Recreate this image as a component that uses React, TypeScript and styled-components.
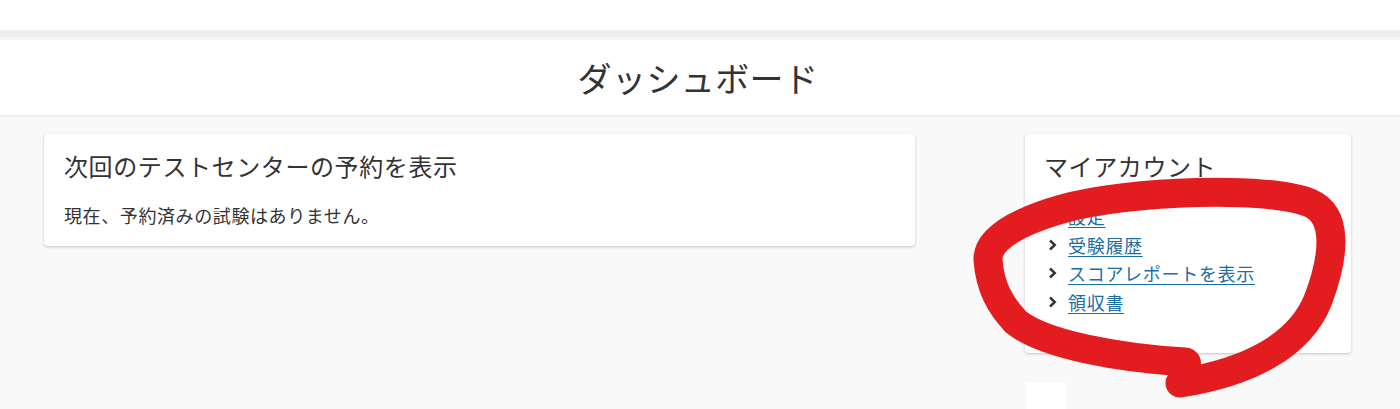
import React from "react";
import styled, { createGlobalStyle } from "styled-components";

const Global = createGlobalStyle`
  html, body { margin: 0; padding: 0; }
  body {
    background: #f9f9f9;
    font-family: "Noto Sans CJK JP", "Noto Sans", sans-serif;
    color: #333;
    overflow: hidden;
  }
`;

const Page = styled.div`
  position: relative;
  width: 1400px;
  height: 409px;
  overflow: hidden;
`;

const TopStrip = styled.div`
  height: 29px;
  background: #fff;
`;

const Divider = styled.div`
  height: 6px;
  background: #ededed;
  border-top: 2px solid #f6f6f6;
  border-bottom: 3px solid #f6f6f6;
`;

const Header = styled.header`
  height: 75px;
  background: #fff;
  border-bottom: 2px solid #eeeeee;
  display: flex;
  align-items: center;
  justify-content: center;
`;

const PageTitle = styled.h1`
  margin: 0 0 0 -4px;
  font-size: 34px;
  font-weight: 400;
  line-height: 1;
  color: #333;
  letter-spacing: 0.4px;
`;

const Main = styled.main`
  display: flex;
  align-items: flex-start;
  gap: 110px;
  padding: 17px 0 0 44px;
`;

const Column = styled.div<{ $width: number }>`
  width: ${(p) => p.$width}px;
  display: flex;
  flex-direction: column;
  gap: 30px;
`;

const Card = styled.section<{ $bottom: number }>`
  background: #fff;
  border-radius: 4px;
  box-shadow: 0 1px 3px rgba(0, 0, 0, 0.22);
  padding: 16px 20px ${(p) => p.$bottom}px 20px;
`;

const CardTitle = styled.h2<{ $indent?: number }>`
  margin: 0;
  font-size: 24px;
  font-weight: 400;
  line-height: 32px;
  letter-spacing: 0.6px;
  color: #333;
  margin-left: ${(p) => p.$indent ?? 0}px;
`;

const BodyText = styled.p`
  margin: 19px 0 0;
  font-size: 18px;
  line-height: 28px;
  letter-spacing: 0.6px;
  color: #333;
`;

const LinkList = styled.ul`
  list-style: none;
  margin: 20px 0 0;
  padding: 0 0 0 3px;
`;

const LinkItem = styled.li`
  display: flex;
  align-items: center;
  gap: 11px;
  height: 28.5px;
`;

const Chevron = styled.svg`
  width: 9px;
  height: 12px;
  flex: none;
`;

const AccountLink = styled.a`
  font-size: 18px;
  line-height: 28px;
  letter-spacing: 0.7px;
  color: #1c6ea4;
  text-decoration: underline;
  text-underline-offset: 3px;
`;

const Stub = styled.div`
  width: 40px;
  height: 40px;
  background: #fff;
  margin-left: 1px;
`;

const Marker = styled.svg`
  position: absolute;
  left: 0;
  top: 0;
  pointer-events: none;
`;

const links = ["設定", "受験履歴", "スコアレポートを表示", "領収書"];

export default function App() {
  return (
    <Page>
      <Global />
      <TopStrip />
      <Divider />
      <Header>
        <PageTitle>ダッシュボード</PageTitle>
      </Header>
      <Main>
        <Column $width={871}>
          <Card $bottom={17}>
            <CardTitle>次回のテストセンターの予約を表示</CardTitle>
            <BodyText>現在、予約済みの試験はありません。</BodyText>
          </Card>
        </Column>
        <Column $width={326}>
          <Card $bottom={37}>
            <CardTitle $indent={-1}>マイアカウント</CardTitle>
            <LinkList>
              {links.map((l) => (
                <LinkItem key={l}>
                  <Chevron viewBox="0 0 9 12">
                    <polyline
                      points="2,1.5 6.8,6 2,10.5"
                      fill="none"
                      stroke="#333"
                      strokeWidth="2.4"
                    />
                  </Chevron>
                  <AccountLink href="#">{l}</AccountLink>
                </LinkItem>
              ))}
            </LinkList>
          </Card>
          <Stub />
        </Column>
      </Main>
      <Marker width="1400" height="409" viewBox="0 0 1400 409">
        <path
          d="M1180,383 C1250,372 1300,345 1318,300 C1335,255 1338,215 1310,203 C1270,186 1130,190 1062,209 C1020,221 987,238 988,260 C990,287 1000,305 1016,322 C1045,345 1120,358 1185,362"
          fill="none"
          stroke="#e31d1f"
          strokeWidth="29"
          strokeLinecap="round"
          strokeLinejoin="round"
        />
        <circle cx="1186" cy="363" r="15" fill="#e31d1f" />
      </Marker>
    </Page>
  );
}
